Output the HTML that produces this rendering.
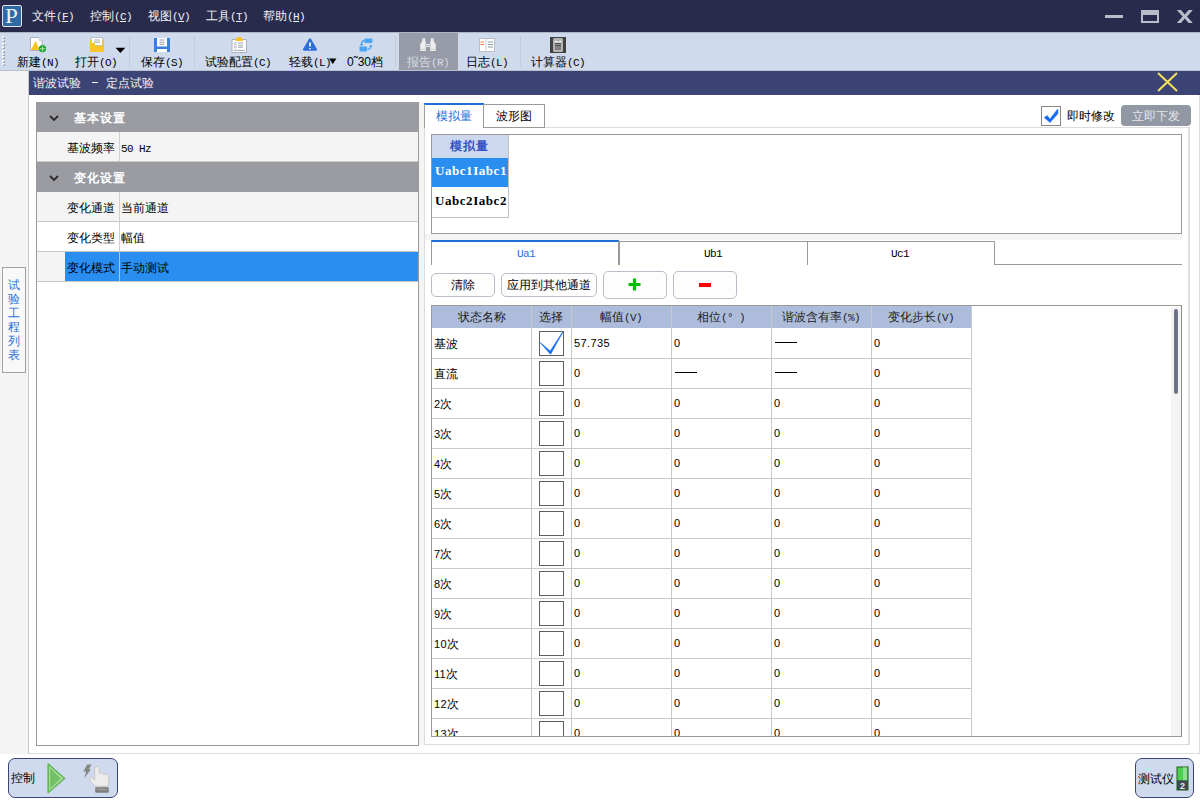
<!DOCTYPE html><html><head><meta charset="utf-8"><style>
*{box-sizing:border-box;margin:0;padding:0}
html,body{width:1200px;height:800px;overflow:hidden;background:#ffffff;font-family:"Liberation Sans",sans-serif;font-size:12px;color:#000}
.a{position:absolute}
.t{position:absolute;white-space:nowrap;line-height:12px;font-size:12px}
.m{font-family:"Liberation Mono",monospace;font-size:11px;letter-spacing:-0.6px}
.u{text-decoration:underline}
</style></head><body><div class="a" style="left:0px;top:0px;width:1200px;height:32px;background:#292b4c"></div><div class="a" style="left:2px;top:5px;width:20px;height:22px;background:#2f6aa6;border:1.5px solid #e6e6ea;border-radius:2px"></div><div class="t" style="left:5px;top:6px;font-family:'Liberation Serif',serif;font-size:21px;line-height:20px;color:#eef2f8;transform:scaleX(1.1);transform-origin:left">P</div><div class="t" style="left:32px;top:10px;color:#f2f2f2">文件<span class="m">(<span class="u">F</span>)</span></div><div class="t" style="left:90px;top:10px;color:#f2f2f2">控制<span class="m">(<span class="u">C</span>)</span></div><div class="t" style="left:148px;top:10px;color:#f2f2f2">视图<span class="m">(<span class="u">V</span>)</span></div><div class="t" style="left:206px;top:10px;color:#f2f2f2">工具<span class="m">(<span class="u">T</span>)</span></div><div class="t" style="left:263px;top:10px;color:#f2f2f2">帮助<span class="m">(<span class="u">H</span>)</span></div><div class="a" style="left:1105px;top:15px;width:18px;height:3px;background:#b9bdc9"></div><div class="a" style="left:1141px;top:10px;width:18px;height:13px;border:2px solid #b9bdc9;border-top-width:5px"></div><svg class="a" style="left:1176px;top:10px" width="18" height="13"><path d="M0.8 0 H5 L8.8 4.4 L12.6 0 H16.8 L11 6.5 L16.8 13 H12.6 L8.8 8.6 L5 13 H0.8 L6.6 6.5 Z" fill="#b9bdc9"/></svg><div class="a" style="left:0px;top:32px;width:1200px;height:39px;background:#cfdaed;border-top:1px solid #aeb6c6;border-bottom:1px solid #b9c0cc"></div><div class="a" style="left:2px;top:36.0px;width:2px;height:2px;background:#f4f6fa;box-shadow:1px 1px 0 #9aa3b5"></div><div class="a" style="left:2px;top:39.4px;width:2px;height:2px;background:#f4f6fa;box-shadow:1px 1px 0 #9aa3b5"></div><div class="a" style="left:2px;top:42.8px;width:2px;height:2px;background:#f4f6fa;box-shadow:1px 1px 0 #9aa3b5"></div><div class="a" style="left:2px;top:46.2px;width:2px;height:2px;background:#f4f6fa;box-shadow:1px 1px 0 #9aa3b5"></div><div class="a" style="left:2px;top:49.6px;width:2px;height:2px;background:#f4f6fa;box-shadow:1px 1px 0 #9aa3b5"></div><div class="a" style="left:2px;top:53.0px;width:2px;height:2px;background:#f4f6fa;box-shadow:1px 1px 0 #9aa3b5"></div><div class="a" style="left:2px;top:56.4px;width:2px;height:2px;background:#f4f6fa;box-shadow:1px 1px 0 #9aa3b5"></div><div class="a" style="left:2px;top:59.8px;width:2px;height:2px;background:#f4f6fa;box-shadow:1px 1px 0 #9aa3b5"></div><div class="a" style="left:2px;top:63.2px;width:2px;height:2px;background:#f4f6fa;box-shadow:1px 1px 0 #9aa3b5"></div><div class="a" style="left:129px;top:36px;width:1px;height:31px;background:#c3cbda"></div><div class="a" style="left:194px;top:36px;width:1px;height:31px;background:#c3cbda"></div><div class="a" style="left:395px;top:36px;width:1px;height:31px;background:#c3cbda"></div><div class="a" style="left:520px;top:36px;width:1px;height:31px;background:#c3cbda"></div><div class="a" style="left:399px;top:33px;width:59px;height:37px;background:#979ca8"></div><div class="t" style="left:17px;top:56px;color:#000">新建<span class="m">(N)</span></div><div class="t" style="left:75px;top:56px;color:#000">打开<span class="m">(O)</span></div><div class="t" style="left:141px;top:56px;color:#000">保存<span class="m">(S)</span></div><div class="t" style="left:205px;top:56px;color:#000">试验配置<span class="m">(C)</span></div><div class="t" style="left:289px;top:56px;color:#000">轻载<span class="m">(L)</span></div><div class="t" style="left:347px;top:56px;color:#000"><span style="font-size:12px">0˜30</span>档</div><div class="t" style="left:407px;top:56px;color:#d9dbe0">报告<span class="m">(R)</span></div><div class="t" style="left:466px;top:56px;color:#000">日志<span class="m">(L)</span></div><div class="t" style="left:531px;top:56px;color:#000">计算器<span class="m">(C)</span></div><svg class="a" style="left:115px;top:47px" width="11" height="7"><path d="M0.5 0.8 H10.3 L5.4 6 Z" fill="#000"/></svg><svg class="a" style="left:329px;top:58px" width="8" height="6"><path d="M0 0.5 H7.5 L3.8 6 Z" fill="#000"/></svg><svg class="a" style="left:29px;top:36px" width="18" height="18">
<path d="M1.5 1.5 H10 L13 4.5 V14.5 H1.5 Z" fill="#fff" stroke="#aab2c2" stroke-width="1"/>
<path d="M10 1.5 V4.5 H13" fill="#e6e8ec" stroke="#c8ccd4" stroke-width="0.8"/>
<path d="M2 14 L6.5 5 L11 14 Z" fill="#fbc21f"/>
<circle cx="13.5" cy="12.7" r="3.6" fill="#22a832"/>
<path d="M13.5 10 V15.4 M10.8 12.7 H16.2" stroke="#b8e6bc" stroke-width="0.9"/>
</svg><svg class="a" style="left:89px;top:36px" width="17" height="17">
<path d="M2.2 1.5 H13.5 V9.5 H2.2 Z" fill="#fff" stroke="#b4bac4" stroke-width="0.9"/>
<path d="M5 4 H11 M5 6.2 H11" stroke="#aeb4bc" stroke-width="1.2"/>
<path d="M1 3.5 H2.2 V7 H6 V9.8 H13.5 V3.5 H15 V16 H1 Z" fill="#fbc52a"/>
</svg><svg class="a" style="left:153px;top:37px" width="18" height="16">
<path d="M1 1 H17 V15 H1 Z" fill="#3a7fd9"/>
<path d="M4 1 H14 V9.5 H4 Z" fill="#fff"/>
<path d="M6.5 3 H11.5 M6.5 5.2 H11.5 M6.5 7.2 H11.5" stroke="#98a0aa" stroke-width="1.1"/>
<path d="M4 12 H14 V15 H4 Z" fill="#fff"/>
</svg><svg class="a" style="left:230px;top:36px" width="18" height="18">
<path d="M2 3.5 H16.5 V16.5 H2 Z" fill="#fff" stroke="#a8b2be" stroke-width="1"/>
<path d="M5.5 5 Q5.5 1 9.2 1 Q12.8 1 12.8 5 Z" fill="#fbc21f"/>
<path d="M4.3 6.5 h2 v2 h-2 Z M4.3 10 h2 v2 h-2 Z" fill="none" stroke="#b4bac2" stroke-width="0.8"/>
<path d="M8 7 H13 M8 9.3 H13 M8 11.3 H13 M3.5 14.4 H15" stroke="#9ea6ae" stroke-width="1"/>
</svg><svg class="a" style="left:302px;top:37px" width="16" height="15">
<path d="M8 2.4 L14 12.6 H2 Z" fill="#2e6fd8" stroke="#2e6fd8" stroke-linejoin="round" stroke-width="2.2"/>
<path d="M8 5.5 V9.5" stroke="#fff" stroke-width="1.6"/>
<path d="M7.2 11 H8.8 V12.2 H7.2 Z" fill="#fff"/>
</svg><svg class="a" style="left:358px;top:37px" width="16" height="16">
<rect x="6.4" y="1.6" width="8" height="4.3" rx="0.8" fill="#4ba5f2"/>
<rect x="1.5" y="9.5" width="7.5" height="5" rx="0.8" fill="#4ba5f2"/>
<path d="M6 3.5 Q3.5 4 3.5 7.5" fill="none" stroke="#4ba5f2" stroke-width="1.3"/>
<path d="M1.6 7 H5.4 L3.5 9.3 Z" fill="#4ba5f2"/>
<path d="M9.5 12.5 Q12.5 12.2 12.8 9.5" fill="none" stroke="#4ba5f2" stroke-width="1.3"/>
<path d="M10.9 10 L12.8 7.6 L14.7 10 Z" fill="#4ba5f2"/>
</svg><svg class="a" style="left:419px;top:37px" width="18" height="15">
<path d="M3.3 1.3 H6.2 V3.8 L6.8 5 L6.8 14 H1.2 V7.2 L2.6 5.4 L3.3 3.8 Z" fill="#ededed"/>
<path d="M11.8 1.3 H14.7 V3.8 L15.4 5.4 L16.8 7.2 V14 H11.2 V5 L11.8 3.8 Z" fill="#ededed"/>
<path d="M6 7 H12 V10 H6 Z" fill="#e2e2e2"/>
<path d="M6 8.5 H12" stroke="#a8acb4" stroke-width="0.8"/>
<path d="M1.5 12.3 H6.5 M11.5 12.3 H16.5" stroke="#c4c6cc" stroke-width="0.7"/>
</svg><svg class="a" style="left:478px;top:37px" width="18" height="16">
<path d="M1.5 1.5 H16.5 V14.5 H1.5 Z" fill="#fff" stroke="#b8bec8" stroke-width="1"/>
<path d="M8 1.5 V14.5" stroke="#c8ccd2" stroke-width="1"/>
<path d="M2.5 5 H6 M2.5 7.5 H6" stroke="#f47a3c" stroke-width="1.2"/>
<path d="M10 5 H15 M10 7.5 H15 M10 10 H15" stroke="#8c98a8" stroke-width="1.1"/>
</svg><svg class="a" style="left:550px;top:37px" width="16" height="16">
<path d="M0 0 H16 V16 H0 Z" fill="#424242"/>
<rect x="3" y="1" width="10" height="14" rx="1.5" fill="#b4b4b4"/>
<path d="M5 3.5 Q8 6 11 3.5 V5.5 H5 Z" fill="#fff"/>
<path d="M5 6.7 H11 M5 8.7 H11" stroke="#303030" stroke-width="1"/>
<path d="M5 9.5 H11 V13 H5 Z" fill="#7e7e7e"/>
</svg><div class="a" style="left:0px;top:71px;width:29px;height:683px;background:#f4f4f4"></div><div class="a" style="left:28px;top:71px;width:1px;height:683px;background:#c9c9c9"></div><div class="a" style="left:29px;top:71px;width:1171px;height:24px;background:#3c4475"></div><div class="t" style="left:33px;top:77px;color:#f4f4f4">谐波试验</div><div class="a" style="left:92px;top:82px;width:6px;height:1px;background:#f4f4f4"></div><div class="t" style="left:106px;top:77px;color:#f4f4f4">定点试验</div><svg class="a" style="left:1156px;top:71px" width="23" height="22"><path d="M2 2 L21 20 M21 2 L2 20" stroke="#f2e35a" stroke-width="2"/></svg><div class="a" style="left:29px;top:95px;width:1171px;height:659px;background:#ffffff;border-bottom:1px solid #dedede;border-right:1px solid #dedede"></div><div class="a" style="left:29px;top:753px;width:1171px;height:1px;background:#dcdcdc"></div><div class="a" style="left:2px;top:267px;width:24px;height:106px;background:#f8f8f8;border:1px solid #a0a0a0"></div><div class="t" style="left:8px;top:278px;color:#2a6fd6;line-height:14px">试<br>验<br>工<br>程<br>列<br>表</div><div class="a" style="left:36px;top:102px;width:383px;height:644px;background:#ffffff;border:1px solid #9a9a9a"></div><div class="a" style="left:419px;top:102px;width:5px;height:643px;background:#f4f4f4"></div><div class="a" style="left:37px;top:102px;width:381px;height:30px;background:#9b9ca1"></div><svg class="a" style="left:49px;top:115px" width="10" height="7"><path d="M1 1 L5 5 L9 1" fill="none" stroke="#2b2b2b" stroke-width="1.8"/></svg><div class="t" style="left:74px;top:112px;color:#ffffff;font-weight:bold;letter-spacing:1px">基本设置</div><div class="a" style="left:37px;top:132px;width:381px;height:30px;background:#f4f4f4;border-bottom:1px solid #c9c9c9"></div><div class="a" style="left:119px;top:132px;width:1px;height:29px;background:#cfcfcf"></div><div class="t" style="left:67px;top:142px;">基波频率</div><div class="t" style="left:121px;top:142px;"><span class="m">50 Hz</span></div><div class="a" style="left:37px;top:162px;width:381px;height:30px;background:#9b9ca1"></div><svg class="a" style="left:49px;top:175px" width="10" height="7"><path d="M1 1 L5 5 L9 1" fill="none" stroke="#2b2b2b" stroke-width="1.8"/></svg><div class="t" style="left:74px;top:172px;color:#ffffff;font-weight:bold;letter-spacing:1px">变化设置</div><div class="a" style="left:37px;top:192px;width:381px;height:30px;background:#f4f4f4;border-bottom:1px solid #c9c9c9"></div><div class="a" style="left:119px;top:192px;width:1px;height:29px;background:#cfcfcf"></div><div class="t" style="left:67px;top:202px;">变化通道</div><div class="t" style="left:121px;top:202px;">当前通道</div><div class="a" style="left:37px;top:222px;width:381px;height:30px;background:#ffffff;border-bottom:1px solid #c9c9c9"></div><div class="a" style="left:119px;top:222px;width:1px;height:29px;background:#cfcfcf"></div><div class="t" style="left:67px;top:232px;">变化类型</div><div class="t" style="left:121px;top:232px;">幅值</div><div class="a" style="left:37px;top:252px;width:381px;height:30px;background:#f4f4f4;border-bottom:1px solid #c9c9c9"></div><div class="a" style="left:65px;top:252px;width:353px;height:29px;background:#2a8ef0"></div><div class="a" style="left:119px;top:252px;width:1px;height:29px;background:#9fc8f2"></div><div class="t" style="left:67px;top:262px;">变化模式</div><div class="t" style="left:121px;top:262px;">手动测试</div><div class="a" style="left:424px;top:127px;width:766px;height:618px;background:#ffffff;border:1px solid #dcdcdc;border-width:1px 2px 1px 1px"></div><div class="a" style="left:424px;top:103px;width:60px;height:25px;background:#ffffff;border-left:1px solid #a0a0a0;border-top:2px solid #1d6fd6"></div><div class="t" style="left:436px;top:110px;color:#1d6fd6">模拟量</div><div class="a" style="left:483px;top:104px;width:62px;height:24px;background:#ffffff;border:1px solid #9a9a9a"></div><div class="t" style="left:496px;top:110px;">波形图</div><div class="a" style="left:1041px;top:106px;width:20px;height:20px;background:#fff;border:1px solid #878787"></div><svg class="a" style="left:1041px;top:106px" width="20" height="20"><path d="M3.3 11.5 L6.3 9.6 L8.8 13.2 L16.8 3 L16.9 7.6 L9 16.5 Z" fill="#1466f5" stroke="#1466f5" stroke-width="0.6" stroke-linejoin="round"/></svg><div class="t" style="left:1067px;top:110px;">即时修改</div><div class="a" style="left:1121px;top:105px;width:70px;height:21px;background:#9198a4;border-radius:4px"></div><div class="t" style="left:1132px;top:110px;color:#e4e6ea">立即下发</div><div class="a" style="left:431px;top:134px;width:751px;height:100px;background:#ffffff;border:1px solid #9a9a9a"></div><div class="a" style="left:432px;top:135px;width:77px;height:23px;background:#cdd8ee;border-right:1px solid #c2c2c2"></div><div class="t" style="left:450px;top:140px;color:#3553c6;font-weight:bold;letter-spacing:1px">模拟量</div><div class="a" style="left:432px;top:158px;width:77px;height:29px;background:#2a8ef0;border-right:1px solid #c2c2c2"></div><div class="t" style="left:435px;top:165px;color:#fff;font-family:'Liberation Serif',serif;font-weight:bold;font-size:13px;letter-spacing:0.55px">Uabc1Iabc1</div><div class="a" style="left:432px;top:187px;width:77px;height:31px;background:#ffffff;border-right:1px solid #c2c2c2;border-bottom:1px solid #c2c2c2"></div><div class="t" style="left:435px;top:195px;color:#000;font-family:'Liberation Serif',serif;font-weight:bold;font-size:13px;letter-spacing:0.55px">Uabc2Iabc2</div><div class="a" style="left:425px;top:234px;width:757px;height:6px;background:#f4f4f4"></div><div class="a" style="left:431px;top:264px;width:751px;height:1px;background:#9a9a9a"></div><div class="a" style="left:431px;top:240px;width:188px;height:25px;background:#ffffff;border-left:1px solid #9a9a9a;border-top:2px solid #1d6fd6"></div><div class="t" style="left:517px;top:247px;color:#1d6fd6"><span class="m">Ua1</span></div><div class="a" style="left:618px;top:241px;width:190px;height:24px;background:#ffffff;border:1px solid #9a9a9a;border-bottom:none;border-left-width:2px"></div><div class="t" style="left:704px;top:247px;"><span class="m">Ub1</span></div><div class="a" style="left:807px;top:241px;width:188px;height:24px;background:#ffffff;border:1px solid #9a9a9a;border-bottom:none"></div><div class="t" style="left:891px;top:247px;"><span class="m">Uc1</span></div><div class="a" style="left:431px;top:273px;width:64px;height:24px;background:#fdfdfd;border:1px solid #b9bdc9;border-radius:5px"></div><div class="t" style="left:451px;top:279px;">清除</div><div class="a" style="left:501px;top:273px;width:96px;height:24px;background:#fdfdfd;border:1px solid #b9bdc9;border-radius:5px"></div><div class="t" style="left:507px;top:279px;">应用到其他通道</div><div class="a" style="left:603px;top:271px;width:64px;height:28px;background:#fdfdfd;border:1px solid #b9bdc9;border-radius:5px"></div><svg class="a" style="left:628px;top:278px" width="13" height="13"><path d="M6.5 0.5 V12.5 M0.5 6.5 H12.5" stroke="#00c000" stroke-width="3.2"/></svg><div class="a" style="left:673px;top:271px;width:64px;height:28px;background:#fdfdfd;border:1px solid #b9bdc9;border-radius:5px"></div><div class="a" style="left:699px;top:283px;width:12px;height:4px;background:#ff0000"></div><div class="a" style="left:431px;top:305px;width:751px;height:432px;background:#ffffff;border:1px solid #9a9a9a;border-right:1px solid #8a8a8a;overflow:hidden"></div><div class="a" style="left:432px;top:306px;width:739px;height:430px;overflow:hidden"><div class="a" style="left:0;top:0;width:540px;height:22px;background:#aebcdc"></div><div class="t" style="left:0px;top:5px;width:99px;text-align:center;color:#202020">状态名称</div><div class="a" style="left:99px;top:0;width:1px;height:430px;background:#c9c9c9"></div><div class="t" style="left:99px;top:5px;width:40px;text-align:center;color:#202020">选择</div><div class="a" style="left:139px;top:0;width:1px;height:430px;background:#c9c9c9"></div><div class="t" style="left:139px;top:5px;width:100px;text-align:center;color:#202020">幅值<span class="m">(V)</span></div><div class="a" style="left:239px;top:0;width:1px;height:430px;background:#c9c9c9"></div><div class="t" style="left:239px;top:5px;width:100px;text-align:center;color:#202020">相位<span class="m">(° )</span></div><div class="a" style="left:339px;top:0;width:1px;height:430px;background:#c9c9c9"></div><div class="t" style="left:339px;top:5px;width:100px;text-align:center;color:#202020">谐波含有率<span class="m">(%)</span></div><div class="a" style="left:439px;top:0;width:1px;height:430px;background:#c9c9c9"></div><div class="t" style="left:439px;top:5px;width:100px;text-align:center;color:#202020">变化步长<span class="m">(V)</span></div><div class="a" style="left:539px;top:0;width:1px;height:430px;background:#c9c9c9"></div><div class="a" style="left:0;top:52px;width:540px;height:1px;background:#c9c9c9"></div><div class="t" style="left:2px;top:32px">基波</div><div class="a" style="left:107px;top:25px;width:25px;height:25px;border:1px solid #606060;background:#fff"></div><svg class="a" style="left:107px;top:25px" width="25" height="25"><path d="M1.5 11.8 L11.2 20.2 L23.8 1 L11.5 23.2 Z" fill="#1a6ff2" stroke="#1a6ff2" stroke-width="0.9" stroke-linejoin="round"/></svg><div class="t" style="left:142px;top:31px;font-size:11px;letter-spacing:0.4px">57.735</div><div class="t" style="left:242px;top:31px;font-size:11px;letter-spacing:0.4px">0</div><div class="a" style="left:343px;top:36px;width:22px;height:1px;background:#000"></div><div class="t" style="left:442px;top:31px;font-size:11px;letter-spacing:0.4px">0</div><div class="a" style="left:0;top:82px;width:540px;height:1px;background:#c9c9c9"></div><div class="t" style="left:2px;top:62px">直流</div><div class="a" style="left:107px;top:55px;width:25px;height:25px;border:1px solid #606060;background:#fff"></div><div class="t" style="left:142px;top:61px;font-size:11px;letter-spacing:0.4px">0</div><div class="a" style="left:243px;top:66px;width:22px;height:1px;background:#000"></div><div class="a" style="left:343px;top:66px;width:22px;height:1px;background:#000"></div><div class="t" style="left:442px;top:61px;font-size:11px;letter-spacing:0.4px">0</div><div class="a" style="left:0;top:112px;width:540px;height:1px;background:#c9c9c9"></div><div class="t" style="left:2px;top:92px"><span style="font-size:11px;letter-spacing:0.3px">2</span>次</div><div class="a" style="left:107px;top:85px;width:25px;height:25px;border:1px solid #606060;background:#fff"></div><div class="t" style="left:142px;top:91px;font-size:11px;letter-spacing:0.4px">0</div><div class="t" style="left:242px;top:91px;font-size:11px;letter-spacing:0.4px">0</div><div class="t" style="left:342px;top:91px;font-size:11px;letter-spacing:0.4px">0</div><div class="t" style="left:442px;top:91px;font-size:11px;letter-spacing:0.4px">0</div><div class="a" style="left:0;top:142px;width:540px;height:1px;background:#c9c9c9"></div><div class="t" style="left:2px;top:122px"><span style="font-size:11px;letter-spacing:0.3px">3</span>次</div><div class="a" style="left:107px;top:115px;width:25px;height:25px;border:1px solid #606060;background:#fff"></div><div class="t" style="left:142px;top:121px;font-size:11px;letter-spacing:0.4px">0</div><div class="t" style="left:242px;top:121px;font-size:11px;letter-spacing:0.4px">0</div><div class="t" style="left:342px;top:121px;font-size:11px;letter-spacing:0.4px">0</div><div class="t" style="left:442px;top:121px;font-size:11px;letter-spacing:0.4px">0</div><div class="a" style="left:0;top:172px;width:540px;height:1px;background:#c9c9c9"></div><div class="t" style="left:2px;top:152px"><span style="font-size:11px;letter-spacing:0.3px">4</span>次</div><div class="a" style="left:107px;top:145px;width:25px;height:25px;border:1px solid #606060;background:#fff"></div><div class="t" style="left:142px;top:151px;font-size:11px;letter-spacing:0.4px">0</div><div class="t" style="left:242px;top:151px;font-size:11px;letter-spacing:0.4px">0</div><div class="t" style="left:342px;top:151px;font-size:11px;letter-spacing:0.4px">0</div><div class="t" style="left:442px;top:151px;font-size:11px;letter-spacing:0.4px">0</div><div class="a" style="left:0;top:202px;width:540px;height:1px;background:#c9c9c9"></div><div class="t" style="left:2px;top:182px"><span style="font-size:11px;letter-spacing:0.3px">5</span>次</div><div class="a" style="left:107px;top:175px;width:25px;height:25px;border:1px solid #606060;background:#fff"></div><div class="t" style="left:142px;top:181px;font-size:11px;letter-spacing:0.4px">0</div><div class="t" style="left:242px;top:181px;font-size:11px;letter-spacing:0.4px">0</div><div class="t" style="left:342px;top:181px;font-size:11px;letter-spacing:0.4px">0</div><div class="t" style="left:442px;top:181px;font-size:11px;letter-spacing:0.4px">0</div><div class="a" style="left:0;top:232px;width:540px;height:1px;background:#c9c9c9"></div><div class="t" style="left:2px;top:212px"><span style="font-size:11px;letter-spacing:0.3px">6</span>次</div><div class="a" style="left:107px;top:205px;width:25px;height:25px;border:1px solid #606060;background:#fff"></div><div class="t" style="left:142px;top:211px;font-size:11px;letter-spacing:0.4px">0</div><div class="t" style="left:242px;top:211px;font-size:11px;letter-spacing:0.4px">0</div><div class="t" style="left:342px;top:211px;font-size:11px;letter-spacing:0.4px">0</div><div class="t" style="left:442px;top:211px;font-size:11px;letter-spacing:0.4px">0</div><div class="a" style="left:0;top:262px;width:540px;height:1px;background:#c9c9c9"></div><div class="t" style="left:2px;top:242px"><span style="font-size:11px;letter-spacing:0.3px">7</span>次</div><div class="a" style="left:107px;top:235px;width:25px;height:25px;border:1px solid #606060;background:#fff"></div><div class="t" style="left:142px;top:241px;font-size:11px;letter-spacing:0.4px">0</div><div class="t" style="left:242px;top:241px;font-size:11px;letter-spacing:0.4px">0</div><div class="t" style="left:342px;top:241px;font-size:11px;letter-spacing:0.4px">0</div><div class="t" style="left:442px;top:241px;font-size:11px;letter-spacing:0.4px">0</div><div class="a" style="left:0;top:292px;width:540px;height:1px;background:#c9c9c9"></div><div class="t" style="left:2px;top:272px"><span style="font-size:11px;letter-spacing:0.3px">8</span>次</div><div class="a" style="left:107px;top:265px;width:25px;height:25px;border:1px solid #606060;background:#fff"></div><div class="t" style="left:142px;top:271px;font-size:11px;letter-spacing:0.4px">0</div><div class="t" style="left:242px;top:271px;font-size:11px;letter-spacing:0.4px">0</div><div class="t" style="left:342px;top:271px;font-size:11px;letter-spacing:0.4px">0</div><div class="t" style="left:442px;top:271px;font-size:11px;letter-spacing:0.4px">0</div><div class="a" style="left:0;top:322px;width:540px;height:1px;background:#c9c9c9"></div><div class="t" style="left:2px;top:302px"><span style="font-size:11px;letter-spacing:0.3px">9</span>次</div><div class="a" style="left:107px;top:295px;width:25px;height:25px;border:1px solid #606060;background:#fff"></div><div class="t" style="left:142px;top:301px;font-size:11px;letter-spacing:0.4px">0</div><div class="t" style="left:242px;top:301px;font-size:11px;letter-spacing:0.4px">0</div><div class="t" style="left:342px;top:301px;font-size:11px;letter-spacing:0.4px">0</div><div class="t" style="left:442px;top:301px;font-size:11px;letter-spacing:0.4px">0</div><div class="a" style="left:0;top:352px;width:540px;height:1px;background:#c9c9c9"></div><div class="t" style="left:2px;top:332px"><span style="font-size:11px;letter-spacing:0.3px">10</span>次</div><div class="a" style="left:107px;top:325px;width:25px;height:25px;border:1px solid #606060;background:#fff"></div><div class="t" style="left:142px;top:331px;font-size:11px;letter-spacing:0.4px">0</div><div class="t" style="left:242px;top:331px;font-size:11px;letter-spacing:0.4px">0</div><div class="t" style="left:342px;top:331px;font-size:11px;letter-spacing:0.4px">0</div><div class="t" style="left:442px;top:331px;font-size:11px;letter-spacing:0.4px">0</div><div class="a" style="left:0;top:382px;width:540px;height:1px;background:#c9c9c9"></div><div class="t" style="left:2px;top:362px"><span style="font-size:11px;letter-spacing:0.3px">11</span>次</div><div class="a" style="left:107px;top:355px;width:25px;height:25px;border:1px solid #606060;background:#fff"></div><div class="t" style="left:142px;top:361px;font-size:11px;letter-spacing:0.4px">0</div><div class="t" style="left:242px;top:361px;font-size:11px;letter-spacing:0.4px">0</div><div class="t" style="left:342px;top:361px;font-size:11px;letter-spacing:0.4px">0</div><div class="t" style="left:442px;top:361px;font-size:11px;letter-spacing:0.4px">0</div><div class="a" style="left:0;top:412px;width:540px;height:1px;background:#c9c9c9"></div><div class="t" style="left:2px;top:392px"><span style="font-size:11px;letter-spacing:0.3px">12</span>次</div><div class="a" style="left:107px;top:385px;width:25px;height:25px;border:1px solid #606060;background:#fff"></div><div class="t" style="left:142px;top:391px;font-size:11px;letter-spacing:0.4px">0</div><div class="t" style="left:242px;top:391px;font-size:11px;letter-spacing:0.4px">0</div><div class="t" style="left:342px;top:391px;font-size:11px;letter-spacing:0.4px">0</div><div class="t" style="left:442px;top:391px;font-size:11px;letter-spacing:0.4px">0</div><div class="a" style="left:0;top:442px;width:540px;height:1px;background:#c9c9c9"></div><div class="t" style="left:2px;top:422px"><span style="font-size:11px;letter-spacing:0.3px">13</span>次</div><div class="a" style="left:107px;top:415px;width:25px;height:25px;border:1px solid #606060;background:#fff"></div><div class="t" style="left:142px;top:421px;font-size:11px;letter-spacing:0.4px">0</div><div class="t" style="left:242px;top:421px;font-size:11px;letter-spacing:0.4px">0</div><div class="t" style="left:342px;top:421px;font-size:11px;letter-spacing:0.4px">0</div><div class="t" style="left:442px;top:421px;font-size:11px;letter-spacing:0.4px">0</div></div><div class="a" style="left:1171px;top:307px;width:10px;height:429px;background:#f4f4f4"></div><div class="a" style="left:1174px;top:309px;width:4px;height:85px;background:#6f7386;border-radius:2px"></div><div class="a" style="left:8px;top:758px;width:110px;height:40px;background:#cfdaee;border:1.5px solid #3c4475;border-radius:7px"></div><div class="t" style="left:11px;top:772px;">控制</div><svg class="a" style="left:46px;top:762px" width="22" height="33"><path d="M2.2 2 L18.6 16.5 L2.2 30.5 Z" fill="#a6dc96" stroke="#64b65a" stroke-width="1.6" stroke-linejoin="round"/><path d="M4.2 6 L14.6 16.5 L4.2 26.5 Z" fill="#72c066"/></svg><svg class="a" style="left:81px;top:763px" width="30" height="31">
<path d="M6.3 1.5 H10.5 L7.8 6.2 H10 L3.2 15.2 L5.2 8.6 H2.4 Z" fill="#858585"/>
<path d="M13.6 6 Q13.6 3.2 16 3.2 Q18.4 3.2 18.4 6 V10.6 Q19.2 9.6 20.8 9.8 Q22.6 10 22.9 11.6 Q24 10.8 25.6 11.3 Q27.8 12 27.8 14.5 V20.3 Q27.8 23.3 25.6 23.3 H15.6 Q13.2 23.3 11.4 20.6 L8.4 16.6 Q7.6 15.2 8.9 14.6 Q10.4 14 11.9 15.4 L13.6 17.2 Z" fill="#ececec" stroke="#c4c4c4" stroke-width="0.9"/>
<rect x="14.2" y="24.2" width="13.6" height="5.6" rx="1.2" fill="#7e7e7e"/>
<path d="M16 26.6 H26" stroke="#a6a6a6" stroke-width="1"/>
</svg><div class="a" style="left:1135px;top:758px;width:59px;height:40px;background:#cfdaee;border:1.5px solid #3c4475;border-radius:7px"></div><div class="t" style="left:1138px;top:773px;">测试仪</div><svg class="a" style="left:1176px;top:766px" width="13" height="25">
<rect x="0.5" y="0.5" width="12" height="24" fill="#1e5a1e"/>
<rect x="1.5" y="1.5" width="10" height="13" fill="#4fcf4f"/>
<rect x="7" y="1.5" width="4" height="13" fill="#8ee08e"/>
<rect x="1.5" y="14.5" width="10" height="9" fill="#404850"/>
<text x="6.5" y="22.5" font-size="9" font-family="Liberation Sans" font-weight="bold" fill="#e8eef8" text-anchor="middle">2</text>
</svg></body></html>
